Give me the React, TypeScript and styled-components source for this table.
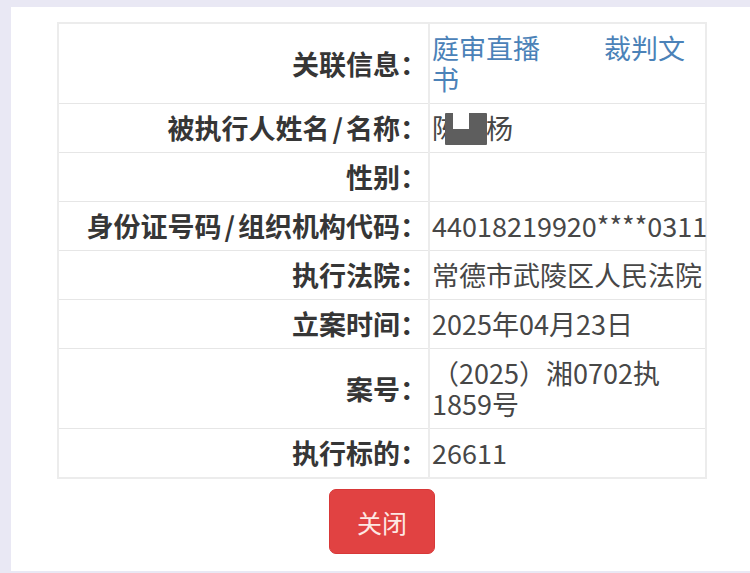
import React from "react";
import styled, { createGlobalStyle } from "styled-components";

const Global = createGlobalStyle`
  html, body { margin: 0; padding: 0; }
  body {
    background: #e9e8f4;
    font-family: "Noto Sans CJK SC", "Noto Sans", sans-serif;
    overflow: hidden;
  }
`;

const Panel = styled.div`
  margin: 7px 0 3px 11px;
  background: #ffffff;
  padding: 15px 0 17px 46px;
  display: flex;
  flex-direction: column;
`;

const Wrapper = styled.div`
  width: 650px;
  display: flex;
  flex-direction: column;
  align-items: center;
  gap: 10px;
`;

const Table = styled.table`
  width: 650px;
  table-layout: fixed;
  border-collapse: collapse;
  border: 2px solid #ececec;
`;

const Row = styled.tr`
  border-bottom: 1px solid #e6e6e6;
`;

const Label = styled.th`
  width: 371px;
  box-sizing: border-box;
  text-align: right;
  vertical-align: middle;
  padding: 8px 1px 9px 0;
  font-size: 27px;
  line-height: 31px;
  font-weight: 700;
  color: #363636;
  border-right: 2px solid #ececec;
`;

const Slash = styled.span`
  padding: 0 3px;
`;

const Value = styled.td`
  text-align: left;
  vertical-align: middle;
  padding: 8px 1px 9px 2px;
  font-size: 27px;
  line-height: 31px;
  font-weight: 400;
  color: #474747;
`;

const Link = styled.a<{ $gap?: number }>`
  color: #4b82b8;
  text-decoration: none;
  margin-left: ${(p) => p.$gap ?? 0}px;
`;

const Redact = styled.span`
  position: relative;
  display: inline-block;
  width: 27px;
  height: 27px;
  vertical-align: -4px;
  &::before {
    content: "";
    position: absolute;
    left: -14px;
    top: -3px;
    width: 42px;
    height: 32px;
    background: #5e5e5e;
    border-radius: 1px;
  }
  &::after {
    content: "";
    position: absolute;
    left: -6px;
    top: -3px;
    width: 16px;
    height: 16px;
    background: #ffffff;
  }
`;

const CloseButton = styled.button`
  width: 106px;
  height: 65px;
  border: 1px solid #d83838;
  border-radius: 7px;
  background: #e14242;
  color: #fde8e4;
  font-family: "Noto Sans CJK SC", sans-serif;
  font-size: 25px;
  cursor: pointer;
  padding: 0;
`;

const withSlash = (text: string) => {
  const parts = text.split("/");
  return parts.map((p, i) => (
    <React.Fragment key={i}>
      {i > 0 && <Slash>/</Slash>}
      {p}
    </React.Fragment>
  ));
};

const rows: { label: string; value: React.ReactNode }[] = [
  {
    label: "关联信息：",
    value: (
      <>
        <Link href="#">庭审直播</Link>
        <Link href="#" $gap={64}>裁判文书</Link>
      </>
    ),
  },
  {
    label: "被执行人姓名/名称：",
    value: (
      <>
        陈
        <Redact />
        杨
      </>
    ),
  },
  { label: "性别：", value: "" },
  { label: "身份证号码/组织机构代码：", value: "44018219920****0311" },
  { label: "执行法院：", value: "常德市武陵区人民法院" },
  { label: "立案时间：", value: "2025年04月23日" },
  { label: "案号：", value: "（2025）湘0702执1859号" },
  { label: "执行标的：", value: "26611" },
];

export default function App() {
  return (
    <>
      <Global />
      <Panel>
        <Wrapper>
          <Table>
            <tbody>
              {rows.map((r) => (
                <Row key={r.label}>
                  <Label>{withSlash(r.label)}</Label>
                  <Value>{r.value}</Value>
                </Row>
              ))}
            </tbody>
          </Table>
          <CloseButton>关闭</CloseButton>
        </Wrapper>
      </Panel>
    </>
  );
}
